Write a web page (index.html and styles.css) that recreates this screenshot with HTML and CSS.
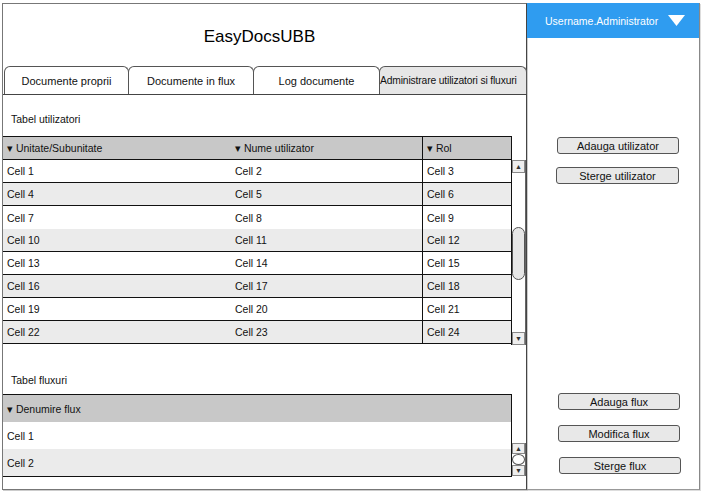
FILE: index.html
```html
<!DOCTYPE html>
<html>
<head>
<meta charset="utf-8">
<link rel="stylesheet" href="styles.css">
</head>
<body>
<div class="app">
  <div class="main">
    <div class="title">EasyDocsUBB</div>
    <div class="tabs">
      <div class="tab t1">Documente proprii</div>
      <div class="tab t2">Documente in flux</div>
      <div class="tab t3">Log documente</div>
      <div class="tab t4 active">Administrare utilizatori si fluxuri</div>
    </div>
    <div class="content">
      <div class="label l1">Tabel utilizatori</div>
      <div class="tablewrap">
        <div class="table t-users">
          <div class="row head"><div class="c c1">&#9662; Unitate/Subunitate</div><div class="c c2">&#9662; Nume utilizator</div><div class="c c3">&#9662; Rol</div></div>
          <div class="row"><div class="c c1">Cell 1</div><div class="c c2">Cell 2</div><div class="c c3">Cell 3</div></div>
          <div class="row alt"><div class="c c1">Cell 4</div><div class="c c2">Cell 5</div><div class="c c3">Cell 6</div></div>
          <div class="row noline"><div class="c c1">Cell 7</div><div class="c c2">Cell 8</div><div class="c c3">Cell 9</div></div>
          <div class="row alt"><div class="c c1">Cell 10</div><div class="c c2">Cell 11</div><div class="c c3">Cell 12</div></div>
          <div class="row"><div class="c c1">Cell 13</div><div class="c c2">Cell 14</div><div class="c c3">Cell 15</div></div>
          <div class="row alt"><div class="c c1">Cell 16</div><div class="c c2">Cell 17</div><div class="c c3">Cell 18</div></div>
          <div class="row"><div class="c c1">Cell 19</div><div class="c c2">Cell 20</div><div class="c c3">Cell 21</div></div>
          <div class="row alt last"><div class="c c1">Cell 22</div><div class="c c2">Cell 23</div><div class="c c3">Cell 24</div></div>
        </div>
        <div class="scroll s1">
          <div class="arrow up">&#9650;</div>
          <div class="track"><div class="thumb"></div></div>
          <div class="arrow down">&#9660;</div>
        </div>
      </div>
      <div class="label l2">Tabel fluxuri</div>
      <div class="tablewrap">
        <div class="table t-flux">
          <div class="row head2"><div class="c">&#9662; Denumire flux</div></div>
          <div class="row r2"><div class="c">Cell 1</div></div>
          <div class="row r2 alt last"><div class="c">Cell 2</div></div>
        </div>
        <div class="scroll s2">
          <div class="arrow up">&#9650;</div>
          <div class="track2"><div class="knob"></div></div>
          <div class="arrow down">&#9660;</div>
        </div>
      </div>
    </div>
  </div>
  <div class="side">
    <div class="userbar">
      <span class="uname">Username.Administrator</span>
      <svg class="caret" width="17" height="11" viewBox="0 0 17 11"><polygon points="0,0 17,0 8.5,11" fill="#fff"/></svg>
    </div>
    <div class="btns b-top">
      <div class="btn w1">Adauga utilizator</div>
      <div class="btn w2">Sterge utilizator</div>
    </div>
    <div class="btns b-bot">
      <div class="btn w3">Adauga flux</div>
      <div class="btn w4">Modifica flux</div>
      <div class="btn w5">Sterge flux</div>
    </div>
  </div>
</div>
</body>
</html>
```
FILE: styles.css
```css
* { box-sizing: border-box; }
html, body { margin: 0; padding: 0; background: #fff; }
body { font-family: "Liberation Sans", Arial, sans-serif; color: #111; }

.app {
  display: flex;
  margin: 3px 0 0 2px;
  width: 699px;
  height: 488px;
}

.main {
  width: 525px;
  height: 487px;
  border: 1px solid #777;
  border-right: 1px solid #444;
  box-shadow: 1px 1px 0 #ccc;
  display: flex;
  flex-direction: column;
}

.title {
  height: 62px;
  display: flex;
  align-items: center;
  justify-content: center;
  font-size: 17px;
  padding-top: 3px;
  padding-right: 10px;
  color: #000;
}

.tabs {
  display: flex;
  height: 29px;
  border-bottom: 1px solid #444;
  padding-left: 1px;
}
.tab {
  height: 28px;
  border: 1px solid #555;
  border-bottom: none;
  border-radius: 6px 6px 0 0;
  font-size: 11px;
  display: flex;
  align-items: center;
  justify-content: center;
  white-space: nowrap;
  margin-right: -1px;
  background: #fff;
}
.t1 { width: 125px; }
.t2 { width: 126px; }
.t3 { width: 127px; }
.t4 { width: 148px; justify-content: flex-start; padding-left: 0; font-size: 10.3px; letter-spacing: -0.15px; }
.tab.active { background: #e6e6e6; }

.content {
  display: flex;
  flex-direction: column;
}
.label {
  font-size: 10.5px;
  padding-left: 8px;
}
.l1 { height: 41px; padding-top: 18px; }
.l2 { height: 49px; padding-top: 29px; }

.tablewrap { display: flex; }

.table {
  width: 509px;
  border-right: 1px solid #111;
}
.row {
  display: flex;
  height: 23px;
  border-bottom: 1px solid #111;
  font-size: 10.5px;
  background: #fff;
}
.row.noline { border-bottom: none; }
.row.alt { background: #ebebeb; }
.row.head { background: #c8c8c8; border-top: 1px solid #111; height: 24px; }
.c {
  display: flex;
  align-items: center;
  padding-left: 4px;
  white-space: nowrap;
}
.c1 { width: 228px; }
.c2 { width: 191px; }
.c3 { width: 89px; border-left: 1px solid #111; }

.t-flux .row { height: 27px; border-bottom: none; }
.t-flux .row.head2 { background: #c8c8c8; border-top: 1px solid #111; height: 28px; }
.t-flux .row.last { border-bottom: 1px solid #111; height: 28px; }

.scroll {
  width: 14px;
  display: flex;
  flex-direction: column;
  border-right: 1px solid #666;
}
.s1 { margin-top: 24px; height: 185px; }
.s2 { margin-top: 49px; height: 33px; }
.arrow {
  height: 13px;
  border: 1px solid #888;
  background: #eee;
  font-size: 7px;
  color: #333;
  display: flex;
  align-items: center;
  justify-content: center;
}
.track {
  flex: 1;
  position: relative;
  background: #fff;
}
.thumb {
  position: absolute;
  top: 54px;
  left: 0;
  width: 13px;
  height: 53px;
  border: 1px solid #555;
  border-radius: 7px;
  background: #e6e6e6;
}
.track2 {
  flex: 1;
  display: flex;
  align-items: center;
}
.knob {
  width: 14px;
  height: 11px;
  border: 1px solid #555;
  border-radius: 50%;
  background: #fff;
}

.side {
  width: 173px;
  height: 487px;
  border-right: 1px solid #888;
  border-bottom: 1px solid #999;
  display: flex;
  flex-direction: column;
  box-shadow: 1px 1px 0 #ddd;
}
.userbar {
  height: 35px;
  background: #2f9cf0;
  display: flex;
  align-items: center;
  justify-content: space-between;
  padding: 0 14px 0 18px;
  color: #fff;
}
.uname { font-size: 10.5px; }

.btns {
  display: flex;
  flex-direction: column;
  align-items: flex-start;
}
.b-top { margin-top: 99px; gap: 13px; }
.b-bot { margin-top: 209px; gap: 15px; }
.btn {
  height: 17px;
  border: 1px solid #555;
  border-radius: 3px;
  background: #e8e8e8;
  font-size: 11px;
  display: flex;
  align-items: center;
  justify-content: center;
  color: #111;
}
.w1 { width: 122px; margin-left: 30px; }
.w2 { width: 123px; margin-left: 29px; }
.w3 { width: 122px; margin-left: 31px; }
.w4 { width: 122px; margin-left: 31px; }
.w5 { width: 122px; margin-left: 32px; }
```
